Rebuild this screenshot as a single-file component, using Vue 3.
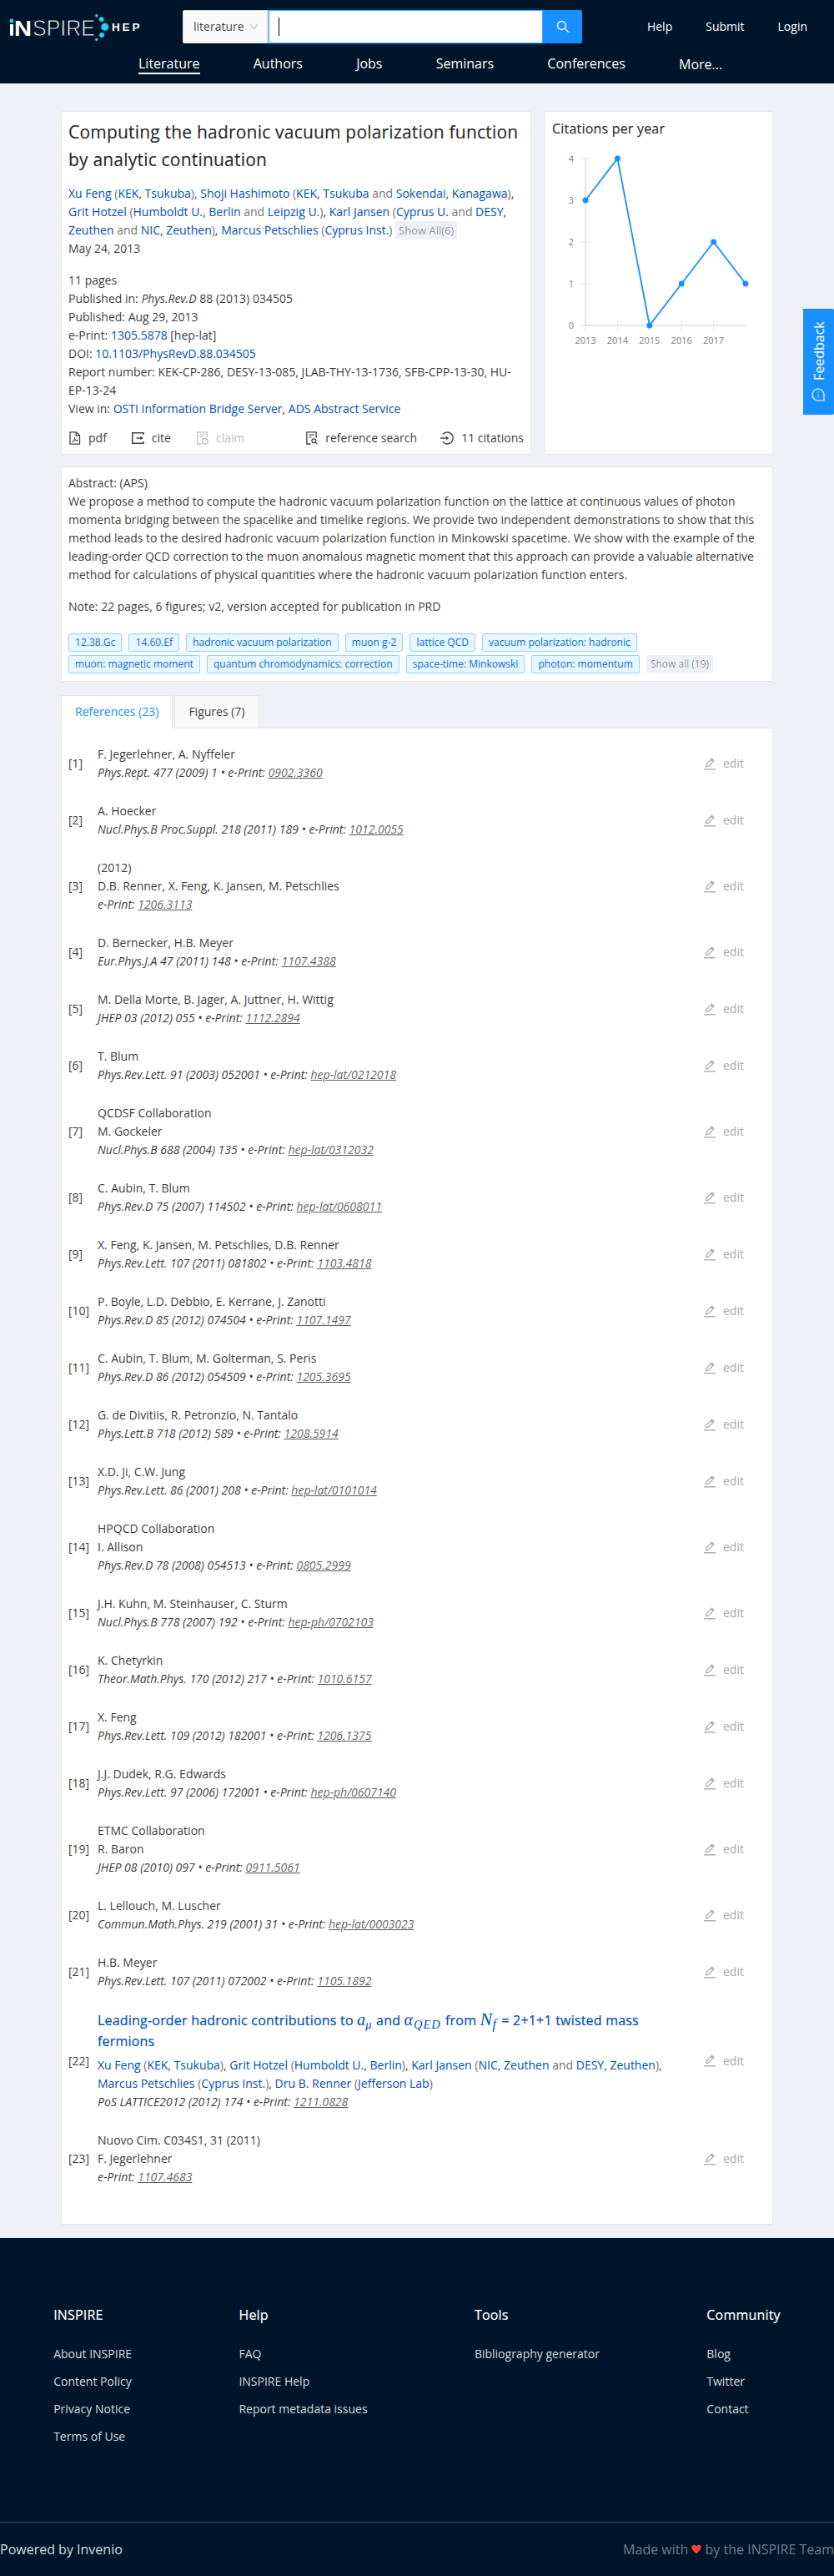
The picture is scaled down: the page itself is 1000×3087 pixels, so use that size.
<script setup>
const nav = ['Literature', 'Authors', 'Jobs', 'Seminars', 'Conferences', 'More...']
const keywords = [
  '12.38.Gc', '14.60.Ef', 'hadronic vacuum polarization', 'muon g-2', 'lattice QCD',
  'vacuum polarization: hadronic', 'muon: magnetic moment', 'quantum chromodynamics: correction',
  'space-time: Minkowski', 'photon: momentum'
]
const references = [
  { authors: 'F. Jegerlehner, A. Nyffeler', pub: 'Phys.Rept. 477 (2009) 1', eprint: '0902.3360' },
  { authors: 'A. Hoecker', pub: 'Nucl.Phys.B Proc.Suppl. 218 (2011) 189', eprint: '1012.0055' },
  { top: '(2012)', authors: 'D.B. Renner, X. Feng, K. Jansen, M. Petschlies', eprint: '1206.3113' },
  { authors: 'D. Bernecker, H.B. Meyer', pub: 'Eur.Phys.J.A 47 (2011) 148', eprint: '1107.4388' },
  { authors: 'M. Della Morte, B. Jager, A. Juttner, H. Wittig', pub: 'JHEP 03 (2012) 055', eprint: '1112.2894' },
  { authors: 'T. Blum', pub: 'Phys.Rev.Lett. 91 (2003) 052001', eprint: 'hep-lat/0212018' },
  { top: 'QCDSF Collaboration', authors: 'M. Gockeler', pub: 'Nucl.Phys.B 688 (2004) 135', eprint: 'hep-lat/0312032' },
  { authors: 'C. Aubin, T. Blum', pub: 'Phys.Rev.D 75 (2007) 114502', eprint: 'hep-lat/0608011' },
  { authors: 'X. Feng, K. Jansen, M. Petschlies, D.B. Renner', pub: 'Phys.Rev.Lett. 107 (2011) 081802', eprint: '1103.4818' },
  { authors: 'P. Boyle, L.D. Debbio, E. Kerrane, J. Zanotti', pub: 'Phys.Rev.D 85 (2012) 074504', eprint: '1107.1497' },
  { authors: 'C. Aubin, T. Blum, M. Golterman, S. Peris', pub: 'Phys.Rev.D 86 (2012) 054509', eprint: '1205.3695' },
  { authors: 'G. de Divitiis, R. Petronzio, N. Tantalo', pub: 'Phys.Lett.B 718 (2012) 589', eprint: '1208.5914' },
  { authors: 'X.D. Ji, C.W. Jung', pub: 'Phys.Rev.Lett. 86 (2001) 208', eprint: 'hep-lat/0101014' },
  { top: 'HPQCD Collaboration', authors: 'I. Allison', pub: 'Phys.Rev.D 78 (2008) 054513', eprint: '0805.2999' },
  { authors: 'J.H. Kuhn, M. Steinhauser, C. Sturm', pub: 'Nucl.Phys.B 778 (2007) 192', eprint: 'hep-ph/0702103' },
  { authors: 'K. Chetyrkin', pub: 'Theor.Math.Phys. 170 (2012) 217', eprint: '1010.6157' },
  { authors: 'X. Feng', pub: 'Phys.Rev.Lett. 109 (2012) 182001', eprint: '1206.1375' },
  { authors: 'J.J. Dudek, R.G. Edwards', pub: 'Phys.Rev.Lett. 97 (2006) 172001', eprint: 'hep-ph/0607140' },
  { top: 'ETMC Collaboration', authors: 'R. Baron', pub: 'JHEP 08 (2010) 097', eprint: '0911.5061' },
  { authors: 'L. Lellouch, M. Luscher', pub: 'Commun.Math.Phys. 219 (2001) 31', eprint: 'hep-lat/0003023' },
  { authors: 'H.B. Meyer', pub: 'Phys.Rev.Lett. 107 (2011) 072002', eprint: '1105.1892' },
  { full: true, pub: 'PoS LATTICE2012 (2012) 174', eprint: '1211.0828' },
  { top: 'Nuovo Cim. C034S1, 31 (2011)', authors: 'F. Jegerlehner', eprint: '1107.4683' }
]
const citations = [3, 4, 0, 1, 2, 1]
const points = citations.map((v, i) => ({ x: 36 + i * 38.4, y: 210 - v * 50 }))
const line = points.map(p => `${p.x},${p.y}`).join(' ')
const footer = [
  { title: 'INSPIRE', links: ['About INSPIRE', 'Content Policy', 'Privacy Notice', 'Terms of Use'] },
  { title: 'Help', links: ['FAQ', 'INSPIRE Help', 'Report metadata issues'] },
  { title: 'Tools', links: ['Bibliography generator'] },
  { title: 'Community', links: ['Blog', 'Twitter', 'Contact'] }
]
</script>

<template>
  <div class="page">
    <header>
      <div class="bar">
        <svg class="logo" width="160" height="34" viewBox="0 0 160 34" aria-label="INSPIRE HEP">
          <circle cx="4" cy="9" r="2.400" fill="#1fd3ff" />
          <rect x="2" y="13" width="4" height="13.700" fill="#fff" />
          <text x="7" y="26.700" textLength="21" lengthAdjust="spacingAndGlyphs" class="lg-n">N</text>
          <text x="29" y="26.900" textLength="75" lengthAdjust="spacingAndGlyphs" class="lg-s">SPIRE</text>
          <circle cx="105.700" cy="2.700" r="1.700" fill="#1fd3ff" />
          <circle cx="111.700" cy="7.100" r="2.900" fill="#1fd3ff" />
          <circle cx="115.800" cy="16.300" r="4.500" fill="#1fd3ff" />
          <circle cx="112.100" cy="26" r="2.900" fill="#1fd3ff" />
          <circle cx="105.700" cy="31.400" r="1.700" fill="#1fd3ff" />
          <text x="124" y="21" textLength="33.500" class="lg-h">HEP</text>
        </svg>
        <div class="search">
          <div class="scope">
            literature
            <svg width="11" height="8" viewBox="0 0 11 8"><path d="M1 1l4.500 5.700L10 1" fill="none" stroke="#bfbfbf" stroke-width="1.200" /></svg>
          </div>
          <div class="input"><i></i></div>
          <div class="go">
            <svg width="16" height="16" viewBox="0 0 16 16" fill="none" stroke="#fff" stroke-width="1.300"><circle cx="6.500" cy="6.500" r="5" /><path d="M10 10l5 4.700" /></svg>
          </div>
        </div>
        <div class="user"><a>Help</a><a>Submit</a><a>Login</a></div>
      </div>
      <nav><a v-for="(n, i) in nav" :key="n" :class="{ active: i === 0, more: i === 5 }">{{ n }}</a></nav>
    </header>

    <main>
      <div class="top">
        <section class="card detail">
          <h1>Computing the hadronic vacuum polarization function by analytic continuation</h1>
          <div class="authors">
            <a>Xu Feng</a> <s>(</s><a>KEK, Tsukuba</a><s>)</s>, <a>Shoji Hashimoto</a> <s>(</s><a>KEK, Tsukuba</a> <s>and</s> <a>Sokendai, Kanagawa</a><s>)</s>,
            <a>Grit Hotzel</a> <s>(</s><a>Humboldt U., Berlin</a> <s>and</s> <a>Leipzig U.</a><s>)</s>, <a>Karl Jansen</a> <s>(</s><a>Cyprus U.</a> <s>and</s> <a>DESY, Zeuthen</a> <s>and</s> <a>NIC, Zeuthen</a><s>)</s>, <a>Marcus Petschlies</a> <s>(</s><a>Cyprus Inst.</a><s>)</s> <span class="show">Show All(6)</span>
          </div>
          <div>May 24, 2013</div>
          <div class="meta">
            <div>11 pages</div>
            <div>Published in: <em>Phys.Rev.D</em> 88 (2013) 034505</div>
            <div>Published: Aug 29, 2013</div>
            <div>e-Print: <a>1305.5878</a> [hep-lat]</div>
            <div>DOI: <a>10.1103/PhysRevD.88.034505</a></div>
            <div>Report number: KEK-CP-286, DESY-13-085, JLAB-THY-13-1736, SFB-CPP-13-30, HU-EP-13-24</div>
            <div>View in: <a>OSTI Information Bridge Server</a>, <a>ADS Abstract Service</a></div>
          </div>
          <div class="actions">
            <span class="pdf"><svg width="14" height="16" viewBox="0 0 14 16" fill="none" stroke="#444" stroke-width="1.300"><path d="M1 .8h7.500l4 4v10.400H1zM8.200 1v4.200h4.300" /><path d="M3.500 12.500c2-1 3.200-3.400 3-5.700M6.500 7.800c.3 2 1.700 3.200 3.800 3.400M3.500 12.500c1.500-1.500 4-2 6.800-1.300" stroke-width="1" /></svg>pdf</span>
            <span class="cite"><svg width="15" height="14" viewBox="0 0 15 14" fill="none" stroke="#444" stroke-width="1.500"><path d="M14 3V.800H.8v12.400H14V11" /><path d="M5.500 7h6" /><path d="M10.300 4.600L13.800 7l-3.500 2.400z" fill="#444" stroke="none" /></svg>cite</span>
            <span class="claim"><svg width="14" height="16" viewBox="0 0 14 16" fill="none" stroke="currentColor" stroke-width="1.300"><path d="M5.500 15H.8V.800h11.400v6.500M3.300 4.200h6.400M3.300 7.200h3" /><circle cx="9.700" cy="11.800" r="3.300" /><path d="M8.200 11.800l1.100 1.200 1.900-2.300" stroke-width="1" /></svg>claim</span>
            <span class="refs"><svg width="14" height="16" viewBox="0 0 14 16" fill="none" stroke="#444" stroke-width="1.300"><path d="M5.500 15H.8V.800h11.400v7M3.300 4.200h6.400M3.300 7.200h3" /><circle cx="9.300" cy="11.300" r="2.400" /><path d="M11.100 13.100l2.300 2.300" /></svg>reference search</span>
            <span class="cits"><svg width="16" height="16" viewBox="0 0 16 16" fill="none" stroke="#444" stroke-width="1.400"><path d="M2.800 3.600a7 7 0 1 1 0 8.800M0 8h8" /><path d="M7 5.500L10.200 8 7 10.500z" fill="#444" stroke="none" /></svg>11 citations</span>
          </div>
        </section>
        <section class="card chart">
          <h2>Citations per year</h2>
          <svg width="240" height="240" viewBox="0 0 240 240">
            <g stroke="#e6e6e8" stroke-width="2">
              <path d="M36 10v200M36 210h192" />
              <path v-for="n in 5" :key="n" :d="`M30 ${n * 50 - 40}h12`" opacity=".6" />
              <path v-for="n in 5" :key="'x' + n" :d="`M${points[n - 1].x} 204v12`" stroke-width="1" />
            </g>
            <g class="tick">
              <text v-for="n in 5" :key="n" x="22" :y="n * 50 - 36" text-anchor="end">{{ 5 - n }}</text>
              <text v-for="n in 5" :key="'l' + n" :x="points[n - 1].x" y="232" text-anchor="middle">{{ 2012 + n }}</text>
            </g>
            <polyline :points="line" fill="none" stroke="#1890ff" stroke-width="1.800" />
            <circle v-for="p in points" :key="p.x" :cx="p.x" :cy="p.y" r="3.500" fill="#1890ff" />
          </svg>
        </section>
      </div>

      <section class="card abstract">
        <div>Abstract: (APS)</div>
        <div>We propose a method to compute the hadronic vacuum polarization function on the lattice at continuous values of photon momenta bridging between the spacelike and timelike regions. We provide two independent demonstrations to show that this method leads to the desired hadronic vacuum polarization function in Minkowski spacetime. We show with the example of the leading-order QCD correction to the muon anomalous magnetic moment that this approach can provide a valuable alternative method for calculations of physical quantities where the hadronic vacuum polarization function enters.</div>
        <div class="note">Note: 22 pages, 6 figures; v2, version accepted for publication in PRD</div>
        <div class="tags"><span v-for="k in keywords" :key="k" class="tag">{{ k }}</span><span class="show">Show all (19)</span></div>
      </section>

      <div class="tabs"><div class="tab on">References (23)</div><div class="tab">Figures (7)</div></div>
      <section class="panel">
        <div v-for="(r, i) in references" :key="i" class="row">
          <div class="num">[{{ i + 1 }}]</div>
          <div class="ref">
            <template v-if="r.full">
              <div class="title">Leading-order hadronic contributions to <span class="m">a<sub>μ</sub></span> and <span class="m al">α<sub>QED</sub></span> from <span class="m big">N<sub>f</sub></span> = 2+1+1 twisted mass fermions</div>
              <div><a>Xu Feng</a> <s>(</s><a>KEK, Tsukuba</a><s>)</s>, <a>Grit Hotzel</a> <s>(</s><a>Humboldt U., Berlin</a><s>)</s>, <a>Karl Jansen</a> <s>(</s><a>NIC, Zeuthen</a> <s>and</s> <a>DESY, Zeuthen</a><s>)</s>, <a>Marcus Petschlies</a> <s>(</s><a>Cyprus Inst.</a><s>)</s>, <a>Dru B. Renner</a> <s>(</s><a>Jefferson Lab</a><s>)</s></div>
            </template>
            <div v-if="r.top">{{ r.top }}</div>
            <div v-if="r.authors">{{ r.authors }}</div>
            <div class="pub"><template v-if="r.pub">{{ r.pub }} • </template>e-Print: <u>{{ r.eprint }}</u></div>
          </div>
          <div class="edit">
            <svg width="14" height="15" viewBox="0 0 14 15" fill="none" stroke="#ababab"><path d="M0 13.800h14" stroke-width="1.400" /><path d="M2.500 10.800l.5-3L9.600 1.200l2.500 2.300-6.700 6.600zM8.500 2.500l2.300 2.200" stroke-width="1.200" /></svg>edit
          </div>
        </div>
      </section>
    </main>

    <footer>
      <div class="cols">
        <div v-for="c in footer" :key="c.title"><h3>{{ c.title }}</h3><p v-for="l in c.links" :key="l">{{ l }}</p></div>
      </div>
      <div class="base">
        <span>Powered by Invenio</span>
        <span class="made">Made with <svg width="12" height="12" viewBox="0 0 12 12"><path d="M6 11.500C3 8.500.3 6.300.3 3.600.3.300 4.500-.2 6 2.700 7.500-.2 11.700.300 11.700 3.600 11.700 6.300 9 8.500 6 11.500z" fill="#ff4133" /></svg> by the INSPIRE Team</span>
      </div>
    </footer>

    <div class="feedback">
      <svg width="16" height="16" viewBox="0 0 16 16" fill="none" stroke="#fff" stroke-width="1.200"><path d="M1 1v7a7 7 0 1 0 7-7z" /><path d="M8 4.500v1M8 7.500v1M8 10.500v1" stroke-width="1.400" /></svg>Feedback
    </div>
  </div>
</template>

<style>
body { margin: 0; }
</style>

<style scoped>
.page { position: relative; width: 1000px; height: 3087px; display: flex; flex-direction: column; background: #f0f1f6; color: rgba(0, 0, 0, .8); font: 14px/22px "Open Sans", "Noto Sans", sans-serif; }
.page *, .page { box-sizing: border-box; }
a { color: #0050b3; }
s { text-decoration: none; color: rgba(0, 0, 0, .6); }
header { height: 100px; background: #001529; color: #fff; }
header a { color: #fff; }
.bar { display: flex; height: 64px; padding-top: 12px; }
.logo { margin: 4px 0 0 10px; }
.lg-n { font: bold 26px "Liberation Sans", sans-serif; fill: #fff; }
.lg-s { font: 27.5px "Liberation Sans", sans-serif; fill: #fff; stroke: #001529; stroke-width: .9; }
.lg-h { font: bold 13.5px "Liberation Sans", sans-serif; fill: #fff; }
.search { display: flex; width: 479px; height: 40px; margin-left: 49px; }
.scope { width: 103px; background: #fafafa; border: 1px solid #d9d9d9; border-radius: 2px 0 0 2px; padding: 0 11px 0 12px; display: flex; align-items: center; justify-content: space-between; color: rgba(0, 0, 0, .75); }
.input { flex: 1; background: #fff; border: 1px solid #40a9ff; box-shadow: 0 0 0 2px rgba(24, 144, 255, .2); padding: 8px 11px; z-index: 1; }
.input i { display: block; width: 1px; height: 22px; background: #000; }
.go { width: 47px; background: #1890ff; border-radius: 0 2px 2px 0; display: flex; align-items: center; justify-content: center; }
.user { flex: 1; display: flex; justify-content: flex-end; gap: 40px; padding: 9px 32px 0 0; }
nav { display: flex; gap: 64.2px; padding-left: 166px; font-size: 16px; line-height: 25px; }
nav a { height: 25px; }
nav .active { border-bottom: 2px solid #fff; }
nav .more { padding-top: 1px; }
main { width: 854px; margin: 33px auto 0; flex: none; }
.card, .panel { background: #fff; border: 1px solid #e8e8e8; border-radius: 2px; padding: 8px; }
.top { display: grid; grid-template-columns: 564px 1fr; gap: 16px; height: 409px; }
/* medium weight */
h1, h2, h3, .title { -webkit-text-stroke: .2px currentColor; letter-spacing: .2px; }
h1 { margin: 0 0 13px; font-size: 21px; line-height: 33px; font-weight: 500; color: rgba(0, 0, 0, .85); }
.meta { margin-top: 16px; }
.show { display: inline-block; background: #f0f1f6; color: rgba(0, 0, 0, .4); border-radius: 2px; font-size: 13px; padding: 0 4px; }
.actions { display: flex; margin-top: 13px; }
.actions span { display: flex; align-items: center; height: 22px; }
.actions svg { margin: 0 9px 0 1px; }
.cite { margin-left: 29px; }
.claim { margin-left: 30px; color: #bfbfbf; }
.refs { margin-left: auto; }
.cits { margin-left: 27px; }
h2 { margin: 0 0 13px; font-size: 16px; font-weight: 500; line-height: 25px; color: rgba(0, 0, 0, .85); }
.chart svg { display: block; margin-left: 4px; }
.tick { font-size: 11px; fill: #7c7c82; }
.abstract { margin-top: 17px; height: 258px; }
.note { margin-top: 16px; }
.tags { display: flex; flex-wrap: wrap; gap: 4px 8px; margin-top: 21px; }
.tag { height: 22px; line-height: 20px; font-size: 12px; padding: 0 7.1px; border: 1px solid #91d5ff; border-radius: 2px; background: #e6f7ff; color: #096dd9; }
.tags .show { font-size: 12px; padding: 0 5px; }
.tabs { display: flex; gap: 2px; margin-top: 16px; height: 40px; margin-bottom: -1px; }
.tab { height: 40px; padding: 0 16px; line-height: 38px; background: #fafafa; border: 1px solid #e8e8e8; }
.tab.on { background: #fff; color: #1890ff; border-bottom-color: #fff; }
.panel { height: 1794px; border-radius: 0; }
.row { display: flex; align-items: center; padding: 12px 0; }
.num { width: 35px; white-space: nowrap; }
.ref { width: 690px; }
.pub { font-style: italic; }
.pub u { color: rgba(0, 0, 0, .65); }
.title { color: #0050b3; font-weight: 500; font-size: 16px; line-height: 25px; margin-bottom: 5px; width: 670px; }
.m { font: italic 20px/0 "Liberation Serif", serif; -webkit-text-stroke: 0; margin-right: 1px; }
.m sub { font-size: .72em; vertical-align: -4px; line-height: 0; }
.al { letter-spacing: 1px; }
.big { font-size: 22px; margin-right: 2px; }
.edit { margin-left: 37px; display: flex; align-items: center; gap: 9px; color: #aaa; }
footer { margin-top: auto; height: 405px; background: #001529; color: rgba(255, 255, 255, .85); }
.cols { display: flex; justify-content: space-around; height: 340px; padding-top: 80px; }
h3 { margin: 0 0 23px; font-size: 16px; line-height: 25px; font-weight: 500; color: #fff; }
p { margin: 0 0 11px; }
.base { border-top: 1px solid #434f5b; display: flex; justify-content: space-between; font-size: 16px; padding-top: 20px; line-height: 25px; }
.made { color: rgba(255, 255, 255, .45); }
.feedback { position: absolute; right: 0; top: 370px; width: 37px; height: 127px; background: #1890ff; color: #fff; border-radius: 2px 0 0 2px; writing-mode: vertical-rl; transform: rotate(180deg); display: flex; align-items: center; justify-content: flex-start; font-size: 16px; padding-top: 16px; gap: 9px; }
</style>
